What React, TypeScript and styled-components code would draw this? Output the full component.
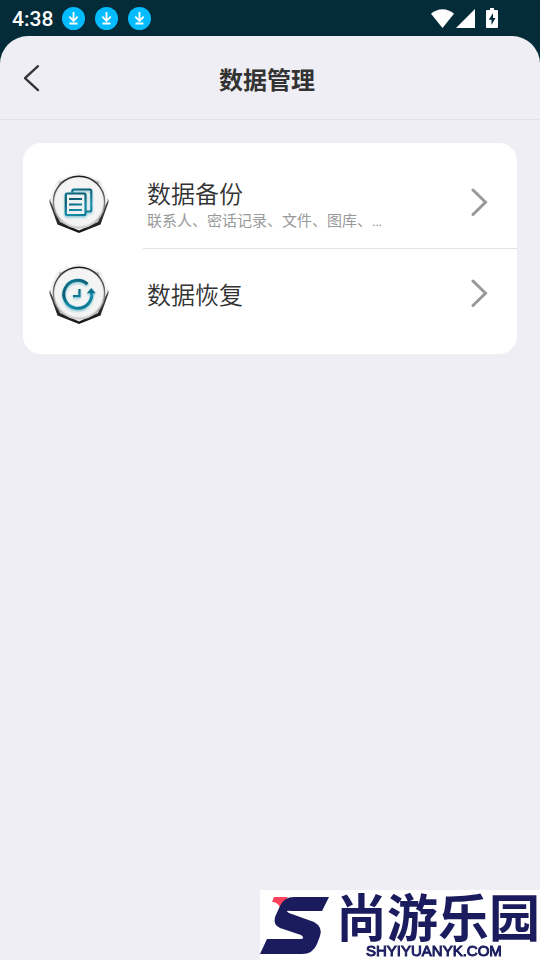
import React from "react";
import styled, { createGlobalStyle } from "styled-components";

const GlobalStyle = createGlobalStyle`
  *, *::before, *::after { box-sizing: border-box; }
  body {
    margin: 0;
    background: #efeef4;
    color: #333333;
    font-family: Roboto, "Noto Sans CJK SC", sans-serif;
  }
  button { font: inherit; color: inherit; background: none; border: 0; padding: 0; cursor: pointer; }
  svg { display: block; flex: none; }
`;

const Screen = styled.div`
  min-height: 100vh;
  display: flex;
  flex-direction: column;
  background: #032b38;
`;

const StatusBar = styled.div`
  height: 36px;
  flex: none;
  display: flex;
  align-items: center;
  padding: 1px 42px 0 12px;
  color: #ffffff;
`;

const Clock = styled.time`
  font-size: 21px;
  font-weight: 500;
  line-height: 24px;
  margin-right: 9px;
`;

const Notifications = styled.div`
  display: flex;
  gap: 10px;
`;

const SystemIcons = styled.div`
  display: flex;
  align-items: flex-end;
  margin-left: auto;
  padding-bottom: 2px;
  gap: 2px;
`;

const BatterySlot = styled.span`
  margin-left: 9px;
`;

const Page = styled.main`
  flex: 1;
  background: #efeef4;
  border-radius: 28px 28px 0 0;
`;

const Header = styled.header`
  height: 84px;
  display: grid;
  grid-template-columns: 1fr auto 1fr;
  align-items: center;
  padding-right: 6px;
  border-bottom: 1px solid #e2e1e6;
`;

const BackButton = styled.button`
  justify-self: start;
  width: 64px;
  height: 64px;
  display: flex;
  align-items: center;
  padding-left: 22px;
`;

const Title = styled.h1`
  margin: 0;
  padding-top: 6px;
  font-size: 24px;
  line-height: 36px;
  font-weight: 700;
`;

const Card = styled.section`
  margin: 23px;
  padding: 15px 0;
  background: #ffffff;
  border-radius: 18px;
`;

const Row = styled.button`
  width: 100%;
  display: flex;
  align-items: flex-start;
  padding-left: 26px;
  text-align: left;
`;

const RowIcon = styled.span`
  flex: none;
  padding-top: 15px;
`;

const RowBody = styled.span<{ $divided: boolean }>`
  flex: 1;
  min-width: 0;
  height: ${(p) => (p.$divided ? 91 : 90)}px;
  margin-left: 34px;
  padding: 0 29px 0 4px;
  display: flex;
  align-items: center;
  justify-content: space-between;
  border-bottom: ${(p) => (p.$divided ? "1px solid #e2e2e2" : "0")};
`;

const RowText = styled.span`
  display: flex;
  flex-direction: column;
  padding-top: 4px;
`;

const RowTitle = styled.span`
  font-size: 24px;
  line-height: 32px;
  font-family: Roboto, "Noto Sans CJK SC DemiLight", "Noto Sans CJK SC", sans-serif;
  font-weight: 350;
`;

const RowNote = styled.span`
  font-size: 15px;
  line-height: 20px;
  color: #999999;
`;

const Watermark = styled.aside`
  position: fixed;
  right: 0;
  bottom: 0;
  display: flex;
  height: 70px;
  background: #ffffff;
  color: #1b1c5e;
`;

const WatermarkText = styled.div`
  display: flex;
  flex-direction: column;
  margin-left: 7px;
`;

const WatermarkName = styled.span`
  font: 700 51px/51px "Noto Sans CJK SC", sans-serif;
`;

const WatermarkSite = styled.span`
  padding: 1px 0 0 30px;
  font: 400 15px/17px "Liberation Sans", sans-serif;
  -webkit-text-stroke: 1px currentColor;
`;

const DownloadBadge = () => (
  <svg width="23" height="23" viewBox="0 0 23 23" fill="none" stroke="#fff" strokeWidth="1.8">
    <circle cx="11.5" cy="11.5" r="11.5" fill="#03bcff" stroke="none" />
    <path d="M11.5 5v8.500M7.300 9.700l4.200 4.200 4.200-4.200M7.500 16.500h8" />
  </svg>
);

const WifiIcon = () => (
  <svg width="23" height="19" viewBox="0 0 23 19" fill="#fff">
    <path d="M0 4.8C6.5-1.4 16.5-1.4 23 4.8L11.5 19z" />
  </svg>
);

const SignalIcon = () => (
  <svg width="19" height="19" viewBox="0 0 19 19" fill="#fff">
    <path d="M19 0v19H0z" />
  </svg>
);

const BatteryIcon = () => (
  <svg width="12" height="20" viewBox="0 0 12 20">
    <path fill="#fff" d="M4 0h4v2h3q1 0 1 1v16q0 1-1 1H1q-1 0-1-1V3q0-1 1-1h3z" />
    <path fill="#032b38" d="M7 5 2.8 11.8h2.7V17l4-7H7z" />
  </svg>
);

const BackIcon = () => (
  <svg width="18" height="28" viewBox="0 0 18 28" fill="none" stroke="#333" strokeWidth="2.3" strokeLinecap="round" strokeLinejoin="round">
    <path d="M16 2.2 3 14.2l13 12" />
  </svg>
);

const ChevronIcon = () => (
  <svg width="17" height="30" viewBox="0 0 17 30" fill="none" stroke="#999" strokeWidth="3" strokeLinecap="round" strokeLinejoin="miter">
    <path d="M2 2l12.500 12.300L2 26.500" />
  </svg>
);

const Medallion = ({ id, children }: { id: string; children: React.ReactNode }) => (
  <svg width="60" height="60" viewBox="0 0 60 60" fill="none">
    <defs>
      <linearGradient id={`${id}-body`} x1="0" y1="0" x2="0" y2="1">
        <stop offset="0" stopColor="#e8e8e8" />
        <stop offset="0.42" stopColor="#f4f4f4" />
        <stop offset="0.5" stopColor="#444444" />
        <stop offset="1" stopColor="#151515" />
      </linearGradient>
      <linearGradient id={`${id}-facet`} x1="0" y1="0" x2="0" y2="1">
        <stop offset="0" stopColor="#f4f4f4" />
        <stop offset="0.5" stopColor="#ffffff" />
        <stop offset="0.8" stopColor="#c8c8c8" />
        <stop offset="1" stopColor="#eeeeee" />
      </linearGradient>
      <linearGradient id={`${id}-ring`} x1="0" y1="0" x2="0" y2="1">
        <stop offset="0" stopColor="#1c1c1c" />
        <stop offset="0.5" stopColor="#777777" />
        <stop offset="1" stopColor="#cccccc" />
      </linearGradient>
      <linearGradient id={`${id}-ink`} gradientUnits="userSpaceOnUse" x1="20" y1="14" x2="36" y2="46">
        <stop offset="0" stopColor="#087d98" />
        <stop offset="0.35" stopColor="#075a70" />
        <stop offset="0.7" stopColor="#168eac" />
        <stop offset="1" stopColor="#08718a" />
      </linearGradient>
      <filter id={`${id}-shadow`} x="-20%" y="-20%" width="140%" height="150%">
        <feDropShadow dx="0" dy="1.5" stdDeviation="0.8" floodColor="#1795b3" floodOpacity="0.5" />
      </filter>
    </defs>
    <path d="M30 0 50 6.500l3 3.500 7 18-8.500 23.500L30 60 8.500 51.500 0 28 7 10l3-3.500z" fill={`url(#${id}-body)`} />
    <path d="M30 .5 49.500 7l9 21-9.500 21L30 57.500 11 49 1.500 28 10.500 7z" fill={`url(#${id}-facet)`} />
    <path d="M10 8.500l6-1.500-7 8zM50 8.500l-6-1.500 7 8z" fill="#bcbcbc" />
    <circle cx="30" cy="29" r="25.700" fill="#e3e3e3" stroke={`url(#${id}-ring)`} strokeWidth="1.400" />
    <circle cx="30" cy="28.800" r="24" fill="#f4f4f4" />
    <g stroke={`url(#${id}-ink)`} filter={`url(#${id}-shadow)`}>{children}</g>
  </svg>
);

const BackupIcon = () => (
  <Medallion id="backup">
    <path strokeWidth="2" d="M23.300 19.500V18q0-1.500 1.500-1.500h16q1.500 0 1.500 1.500v19q0 1.500-1.500 1.500h-4" />
    <rect x="16.800" y="20.500" width="19.700" height="21.500" rx="1.500" strokeWidth="2.200" fill="#eef1f2" />
    <path strokeWidth="2" d="M20 26h13M20 31.500h13M20 37h13" />
  </Medallion>
);

const RestoreIcon = () => (
  <Medallion id="restore">
    <path strokeWidth="3" d="M38.500 20.200A14 14 0 1 0 42.600 28" />
    <path d="M42.300 24l4.500 5.200h-9z" fill="#08718a" stroke="none" />
    <path strokeWidth="2.200" d="M30.500 25v7.200H24" />
  </Medallion>
);

const BrandMark = () => (
  <svg width="69" height="70" viewBox="0 0 69 70">
    <path fill="#ff4259" d="M14 7h14l-8 10q-3-5-8-5z" />
    <path
      fill="#1b1c5e"
      d="M69 7H34Q24 7 20 16L15 27Q13 35 20 38L41 45Q46 49 40 49H7L0 64H42Q53 64 57 54L60 46Q63 37 54 32L29 23Q24 20 31 21H62Z"
    />
  </svg>
);

const ROWS = [
  { title: "数据备份", note: "联系人、密话记录、文件、图库、…", icon: <BackupIcon /> },
  { title: "数据恢复", icon: <RestoreIcon /> },
];

export default function App() {
  return (
    <>
      <GlobalStyle />
      <Screen>
        <StatusBar>
          <Clock>4:38</Clock>
          <Notifications>
            <DownloadBadge />
            <DownloadBadge />
            <DownloadBadge />
          </Notifications>
          <SystemIcons>
            <WifiIcon />
            <SignalIcon />
            <BatterySlot>
              <BatteryIcon />
            </BatterySlot>
          </SystemIcons>
        </StatusBar>
        <Page>
          <Header>
            <BackButton type="button" aria-label="返回">
              <BackIcon />
            </BackButton>
            <Title>数据管理</Title>
          </Header>
          <Card>
            {ROWS.map((row, i) => (
              <Row type="button" key={row.title}>
                <RowIcon>{row.icon}</RowIcon>
                <RowBody $divided={i < ROWS.length - 1}>
                  <RowText>
                    <RowTitle>{row.title}</RowTitle>
                    {row.note && <RowNote>{row.note}</RowNote>}
                  </RowText>
                  <ChevronIcon />
                </RowBody>
              </Row>
            ))}
          </Card>
        </Page>
      </Screen>
      <Watermark>
        <BrandMark />
        <WatermarkText>
          <WatermarkName lang="zh-CN">尚游乐园</WatermarkName>
          <WatermarkSite>SHYIYUANYK.COM</WatermarkSite>
        </WatermarkText>
      </Watermark>
    </>
  );
}
